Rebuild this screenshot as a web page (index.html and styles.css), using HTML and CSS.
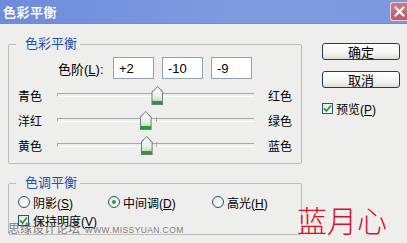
FILE: index.html
```html
<!DOCTYPE html>
<html lang="zh-CN">
  <head>
    <meta charset="UTF-8" />
    <title>色彩平衡</title>
    <link rel="stylesheet" href="styles.css">
  </head>
  <body>
    <div class="window">
      <div class="titlebar">
        <span class="title">色彩平衡</span>
        <span class="close">
          <svg width="11" height="11" viewBox="0 0 11 11">
            <path d="M1.5 1.5 L9.5 9.5 M9.5 1.5 L1.5 9.5" stroke="#fff" stroke-width="2.2" stroke-linecap="round" />
          </svg>
        </span>
      </div>

      <div class="client">
        <div class="main">
          <fieldset class="group balance">
            <legend>色彩平衡</legend>
            <div class="levels">
              <label class="levels-label">色阶(<u>L</u>):</label>
              <input type="text" value="+2" />
              <input type="text" value="-10" />
              <input type="text" value="-9" />
            </div>

            <div class="slider-row">
              <span class="lbl">青色</span>
              <div class="track">
                <div class="thumb" style="left: 51%"></div>
              </div>
              <span class="lbl right">红色</span>
            </div>
            <div class="slider-row">
              <span class="lbl">洋红</span>
              <div class="track ticked">
                <div class="thumb" style="left: 45%"></div>
              </div>
              <span class="lbl right">绿色</span>
            </div>
            <div class="slider-row">
              <span class="lbl">黄色</span>
              <div class="track ticked">
                <div class="thumb" style="left: 45.5%"></div>
              </div>
              <span class="lbl right">蓝色</span>
            </div>
          </fieldset>

          <fieldset class="group tone">
            <legend>色调平衡</legend>
            <div class="radios">
              <span class="radio-item first"><span class="radio"></span><span>阴影(<u>S</u>)</span></span>
              <span class="radio-item second"><span class="radio on"></span><span>中间调(<u>D</u>)</span></span>
              <span class="radio-item"><span class="radio"></span><span>高光(<u>H</u>)</span></span>
            </div>
            <div class="check-row">
              <span class="checkbox">
                <svg width="9" height="9" viewBox="0 0 9 9">
                  <path d="M1 4.5 L3.5 7 L8 1.5" stroke="#22a022" stroke-width="1.8" fill="none" />
                </svg>
              </span>
              <span>保持明度(<u>V</u>)</span>
            </div>
          </fieldset>
        </div>

        <div class="side">
          <button class="btn">确定</button>
          <button class="btn second">取消</button>
          <div class="check-row preview">
            <span class="checkbox">
              <svg width="9" height="9" viewBox="0 0 9 9">
                <path d="M1 4.5 L3.5 7 L8 1.5" stroke="#22a022" stroke-width="1.8" fill="none" />
              </svg>
            </span>
            <span>预览(<u>P</u>)</span>
          </div>
        </div>
      </div>

      <div class="watermark">思缘设计论坛 <span class="url">WWW.MISSYUAN.COM</span></div>
      <div class="signature">蓝月心</div>
    </div>
  </body>
</html>
```

FILE: styles.css
```css
/* Reset */
* {
  margin: 0;
  padding: 0;
  box-sizing: border-box;
}

body {
  width: 407px;
  height: 243px;
  overflow: hidden;
  background: #eeeeec;
  font-family: "Liberation Sans", "Noto Sans CJK SC", sans-serif;
  font-size: 12px;
  color: #000;
}

.window {
  position: relative;
  width: 407px;
  height: 243px;
  overflow: hidden;
}

/* Title bar */
.titlebar {
  height: 24px;
  display: flex;
  align-items: center;
  justify-content: space-between;
  padding-left: 3px;
  background: linear-gradient(to right, #6d8cda, #7f9be0 60%, #7c99df);
  border-bottom: 1px solid #6e8bd6;
}

.title {
  color: #fff;
  font-family: "Noto Sans CJK SC", sans-serif;
  font-size: 13px;
  font-weight: 700;
  line-height: 14px;
  letter-spacing: 0.5px;
  text-shadow: 0 0 1px #5a74c0;
}

.close {
  width: 18px;
  height: 19px;
  margin-right: -1px;
  display: flex;
  align-items: center;
  justify-content: center;
  background: linear-gradient(#cf7b8b, #b85a6e);
  border: 1px solid #ecd0d6;
  border-right: none;
  border-radius: 3px 0 0 3px;
}

/* Client area */
.client {
  display: flex;
  padding-top: 13px;
}

.main {
  width: 302px;
  padding-left: 8px;
}

.group {
  border: 1px solid #bdbcb6;
  border-radius: 2px;
  padding: 0 0 0 9px;
}

.group legend {
  margin-left: -2px;
  padding: 0 3px 0 9px;
  font-size: 13px;
  line-height: 14px;
  color: #1f50ae;
}

.balance {
  height: 127px;
  padding-top: 6px;
}

.levels {
  display: flex;
  align-items: center;
  gap: 8px;
  height: 22px;
  padding-left: 40px;
  margin-bottom: 5px;
}

.levels-label {
  width: 47px;
  font-size: 13px;
}

.levels input {
  width: 41px;
  height: 22px;
  border: 1px solid #8fa3b8;
  background: #fff;
  padding-left: 5px;
  font-family: "Liberation Sans", sans-serif;
  font-size: 13px;
  color: #000;
}

.slider-row {
  display: flex;
  height: 25px;
  align-items: center;
}

.lbl {
  width: 39px;
  font-size: 12px;
  line-height: 14px;
}

.lbl.right {
  width: auto;
  margin-left: 14px;
}

.track {
  position: relative;
  width: 197px;
  height: 25px;
}

.track::before {
  content: "";
  position: absolute;
  left: 0;
  right: 0;
  top: 9px;
  height: 2px;
  border-top: 1px solid #a8a8a4;
  border-bottom: 1px solid #ffffff;
  border-left: 1px solid #a8a8a4;
}

.track.ticked::after {
  content: "";
  position: absolute;
  left: 99px;
  top: 8px;
  width: 1px;
  height: 5px;
  background: #a8a8a4;
}

.thumb {
  position: absolute;
  top: 2px;
  width: 12px;
  height: 19px;
  margin-left: -6px;
  z-index: 1;
}

.thumb::before {
  content: "";
  position: absolute;
  inset: 0;
  background: #6f7c80;
  clip-path: polygon(50% 0, 100% 32%, 100% 100%, 0 100%, 0 32%);
}

.thumb::after {
  content: "";
  position: absolute;
  left: 1px;
  right: 1px;
  top: 1px;
  bottom: 1px;
  background: linear-gradient(#ffffff, #e4efe2 60%, #c8ddc6 80%, #22a032 82%, #1f9a2c);
  clip-path: polygon(50% 0, 100% 32%, 100% 100%, 0 100%, 0 32%);
}

.tone {
  margin-top: 12px;
  height: 59px;
  padding-top: 4px;
}

.radios {
  display: flex;
  height: 16px;
  align-items: center;
}

.radio-item {
  display: flex;
  align-items: center;
  gap: 3px;
  font-size: 12px;
}

.radio-item.first {
  width: 90px;
}

.radio-item.second {
  width: 104px;
}

.radio {
  width: 12px;
  height: 12px;
  border-radius: 50%;
  border: 1px solid #27527a;
  background: radial-gradient(circle at 60% 65%, #ffffff, #e2e2dc);
  display: flex;
  align-items: center;
  justify-content: center;
}

.radio.on::after {
  content: "";
  width: 4px;
  height: 4px;
  border-radius: 50%;
  background: #2aa02a;
}

.check-row {
  display: flex;
  align-items: center;
  gap: 4px;
  height: 16px;
  margin-top: 2px;
  font-size: 12px;
}

.checkbox {
  width: 11px;
  height: 11px;
  border: 1px solid #27527a;
  background: linear-gradient(135deg, #e4e4de, #ffffff);
  display: flex;
  align-items: center;
  justify-content: center;
}

/* Side buttons */
.side {
  margin-left: 20px;
  padding-top: 6px;
  display: flex;
  flex-direction: column;
}

.btn {
  width: 78px;
  height: 17px;
  border: 1px solid #1f3a70;
  border-radius: 3px;
  background: linear-gradient(#ffffff, #f2f2ee 70%, #dcdcd4);
  font-family: "Noto Sans CJK SC", sans-serif;
  font-size: 13px;
  line-height: 13px;
  color: #000;
}

.btn.second {
  margin-top: 11px;
}

.preview {
  margin-top: 12px;
  gap: 3px;
}

/* Overlays */
.watermark {
  position: absolute;
  left: 8px;
  top: 221px;
  font-family: "Noto Sans CJK SC", sans-serif;
  font-size: 12px;
  line-height: 13px;
  color: rgba(80, 80, 80, 0.75);
}

.watermark .url {
  font-family: "Liberation Sans", sans-serif;
  font-size: 8.5px;
  letter-spacing: 0.4px;
  margin-left: 2px;
}

.signature {
  position: absolute;
  left: 297px;
  top: 204px;
  font-family: "Noto Sans CJK SC", sans-serif;
  font-size: 30px;
  line-height: 30px;
  font-weight: 300;
  color: #d3122b;
}
```
